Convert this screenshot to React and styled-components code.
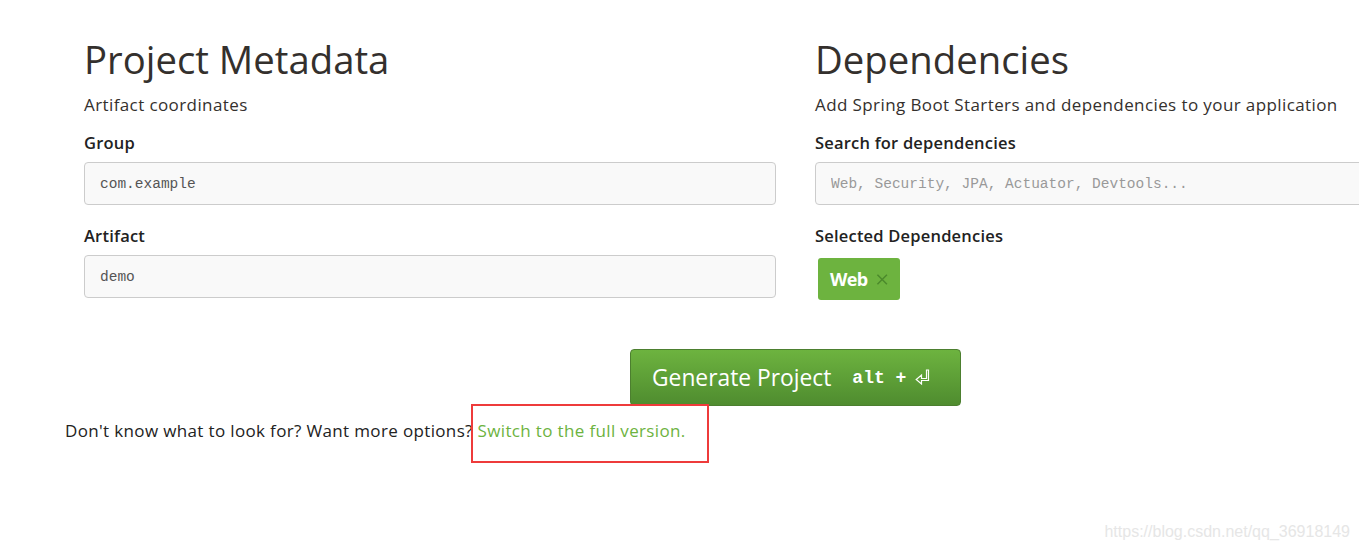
import styled, { createGlobalStyle } from 'styled-components';

//page reset and fonts
const GlobalStyle = createGlobalStyle`
    html, body {
        margin: 0;
        padding: 0;
        overflow: hidden;
        background: #fff;
    }
    body {
        font-family: 'Open Sans', 'Liberation Sans', sans-serif;
        color: #34302d;
    }
`;

const App = () => {
    return (
        <Page>
            <GlobalStyle />
            <Columns>
                <Column>
                    <Title>Project Metadata</Title>
                    <Lead>Artifact coordinates</Lead>
                    <Label>Group</Label>
                    <Field defaultValue="com.example" />
                    <Label>Artifact</Label>
                    <Field defaultValue="demo" />
                </Column>
                <Column>
                    <Title>Dependencies</Title>
                    <Lead>Add Spring Boot Starters and dependencies to your application</Lead>
                    <Label>Search for dependencies</Label>
                    <Field placeholder="Web, Security, JPA, Actuator, Devtools..." />
                    <Label>Selected Dependencies</Label>
                    <Tags>
                        <Tag>
                            Web
                            <svg width="13" height="13" viewBox="0 0 13 13">
                                <path d="M1.5 1.5 L11.5 11.5 M11.5 1.5 L1.5 11.5" stroke="#4c8a2c" strokeWidth="1.6" fill="none" />
                            </svg>
                        </Tag>
                    </Tags>
                </Column>
            </Columns>
            <Actions>
                <Generate>
                    Generate Project
                    <Shortcut>
                        alt +
                        <svg width="15" height="17" viewBox="0 0 15 17">
                            <path
                                d="M13.5 1 L13.5 11.5 L6.5 11.5 L6.5 15 L1.2 10.5 L6.5 6 L6.5 9.5 L11.5 9.5 L11.5 1 Z"
                                stroke="#fff"
                                strokeWidth="1.2"
                                fill="none"
                                strokeLinejoin="miter"
                            />
                        </svg>
                    </Shortcut>
                </Generate>
            </Actions>
            <Hint>
                Don't know what to look for? Want more options?{' '}
                <Highlight>
                    <Link href="#">Switch to the full version.</Link>
                </Highlight>
            </Hint>
            <Watermark>https://blog.csdn.net/qq_36918149</Watermark>
        </Page>
    );
};

const Page = styled.div`
    position: relative;
    width: 1359px;
    height: 551px;
    overflow: hidden;
`;

const Columns = styled.div`
    display: grid;
    grid-template-columns: 692px 692px;
    column-gap: 39px;
    padding: 33px 0 0 84px;
    width: 1423px;
`;

const Column = styled.div`
    display: flex;
    flex-direction: column;
`;

const Title = styled.h1`
    margin: 0;
    font-size: 38.3px;
    font-weight: 400;
    line-height: 52px;
    color: #34302d;
`;

const Lead = styled.p`
    margin: 8px 0 0;
    font-size: 17px;
    letter-spacing: 0.4px;
    line-height: 24px;
`;

const Label = styled.label`
    margin: 16px 0 9px;
    font-size: 16.5px;
    font-weight: 600;
    letter-spacing: 0.2px;
    line-height: 20px;
    color: #222;
`;

const Field = styled.input`
    box-sizing: border-box;
    height: 43px;
    width: 100%;
    margin-bottom: 5px;
    padding: 0 15px;
    border: 1px solid #ccc;
    border-radius: 4px;
    background: #f9f9f9;
    font-family: 'Liberation Mono', monospace;
    font-size: 14.5px;
    color: #555;
    outline: none;
    &::placeholder {
        color: #999;
    }
`;

const Tags = styled.div`
    display: flex;
    padding: 3px 0 0 3px;
`;

const Tag = styled.span`
    display: inline-flex;
    align-items: center;
    gap: 8px;
    height: 42px;
    padding: 0 12px;
    box-sizing: border-box;
    width: 82px;
    border-radius: 3px;
    background: #6db33f;
    color: #fff;
    font-size: 18px;
    font-weight: 700;
    letter-spacing: -0.6px;
`;

const Actions = styled.div`
    display: flex;
    justify-content: center;
    width: 1423px;
    padding-left: 84px;
    margin-top: 46px;
`;

const Generate = styled.button`
    display: inline-flex;
    align-items: center;
    height: 57px;
    width: 331px;
    padding: 0 21px;
    border: 1px solid #4c7f2f;
    border-radius: 4px;
    background: linear-gradient(#6db33f, #4f8c2f);
    color: #fff;
    font-family: 'Open Sans', 'Liberation Sans', sans-serif;
    font-size: 22.8px;
    box-sizing: border-box;
    cursor: pointer;
`;

const Shortcut = styled.span`
    display: inline-flex;
    align-items: center;
    gap: 9px;
    margin-left: 21px;
    font-family: 'Liberation Mono', monospace;
    font-size: 18px;
    font-weight: 700;
`;

const Hint = styled.p`
    margin: 13px 0 0 65px;
    font-size: 17px;
    letter-spacing: 0.35px;
    line-height: 24px;
    color: #222;
`;

const Highlight = styled.span`
    position: relative;
    &::after {
        content: '';
        position: absolute;
        left: -7px;
        top: -15px;
        width: 238px;
        height: 59px;
        box-sizing: border-box;
        border: 2px solid #ee3b3b;
    }
`;

const Link = styled.a`
    color: #6db33f;
    text-decoration: none;
`;

const Watermark = styled.span`
    position: absolute;
    right: 9px;
    bottom: 10px;
    font-family: 'Liberation Sans', sans-serif;
    font-size: 16px;
    color: #e6e6e6;
`;

export default App;
